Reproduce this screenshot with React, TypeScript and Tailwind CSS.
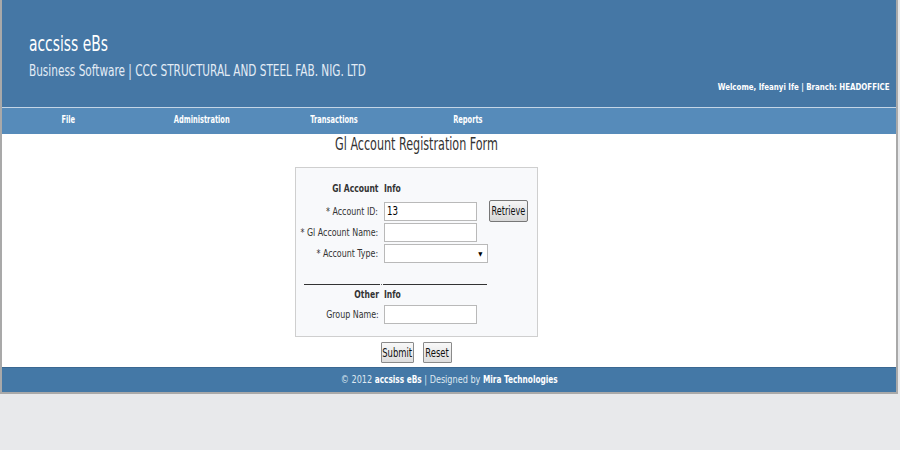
import React from 'react';

const font = "font-['DejaVu_Sans_Condensed','DejaVu_Sans',sans-serif]";

const menu = ['File', 'Administration', 'Transactions', 'Reports'];

// squeezes text horizontally, the reference uses a very narrow face
const Sq: React.FC<{ s?: string; o?: string; className?: string; children: React.ReactNode }> = ({
  s = 'scale-x-[0.75]',
  o = 'origin-left',
  className = '',
  children,
}) => <span className={`inline-block shrink-0 whitespace-nowrap ${s} ${o} ${className}`}>{children}</span>;

const Label: React.FC<{ text: string; bold?: boolean }> = ({ text, bold }) => (
  <div className="w-[84px] shrink-0 pr-[5px] flex items-center justify-end">
    {bold ? (
      <Sq s="scale-x-[0.85]" o="origin-right" className="text-[10px] leading-[12px] font-bold text-[#333]">
        {text}
      </Sq>
    ) : (
      <Sq s="scale-x-[0.8]" o="origin-right" className="text-[11px] leading-[13px] text-[#333]">
        {text}
      </Sq>
    )}
  </div>
);

const InfoTag = () => (
  <Sq s="scale-x-[0.85]" className="text-[10px] leading-[12px] font-bold text-[#333]">
    Info
  </Sq>
);

const TextBox: React.FC<{ value?: string }> = ({ value }) => (
  <div className="w-[93px] h-[19px] border border-[#b9b9b9] bg-white px-[2px] flex items-center overflow-hidden">
    <Sq s="scale-x-[0.8]" className="text-[12px] text-black">
      {value ?? ''}
    </Sq>
  </div>
);

const Btn: React.FC<{ w: string; children: React.ReactNode }> = ({ w, children }) => (
  <div className={`${w} h-[21px] border border-[#8a8a8a] rounded-[1px] bg-gradient-to-b from-[#f8f8f8] to-[#dedede] flex items-center justify-center`}>
    <Sq s="scale-x-[0.78]" o="origin-center" className="text-[12px] text-[#111]">
      {children}
    </Sq>
  </div>
);

export default function App() {
  return (
    <div className={`min-h-[450px] bg-[#e8e9eb] ${font}`}>
      <div className="w-[898px] border-x-2 border-b-2 border-[#a9a9a9] bg-white">
        <header className="h-[107px] bg-[#4577a5] flex flex-col pl-[27px] pr-[6px] text-white">
          <div className="mt-[31px] text-[22px] leading-[26px]">
            <Sq s="scale-x-[0.7]">accsiss eBs</Sq>
          </div>
          <div className="mt-[5px] text-[16px] leading-[18px] text-[#e3ecf5]">
            <Sq s="scale-x-[0.73]">Business Software | CCC STRUCTURAL AND STEEL FAB. NIG. LTD</Sq>
          </div>
          <div className="mt-[1px] self-end text-[9px] leading-[12px] font-bold">
            <Sq s="scale-x-[0.87]" o="origin-right">
              Welcome, Ifeanyi Ife | Branch: HEADOFFICE
            </Sq>
          </div>
        </header>
        <nav className="h-[27px] border-t border-[#c4d5e6] bg-[#568bba] flex items-center pb-[2px]">
          {menu.map((m) => (
            <div key={m} className="w-[133px] text-center text-[10px] leading-[12px] font-bold text-white">
              <Sq s="scale-x-[0.74]" o="origin-center">
                {m}
              </Sq>
            </div>
          ))}
        </nav>
        <main className="h-[233px] flex flex-col items-center">
          <h1 className="mr-[66px] text-[17px] leading-[20px] text-[#333]">
            <Sq s="scale-x-[0.73]" o="origin-center">
              Gl Account Registration Form
            </Sq>
          </h1>
          <div className="mt-[13px] mr-[66px] w-[243px] h-[170px] border border-[#cfcfcf] bg-[#f8f9fb] pl-[4px] pt-[10px]">
            <div className="flex items-center h-[21px]">
              <Label text="Gl Account" bold />
              <InfoTag />
            </div>
            <div className="flex items-center h-[22px] mt-[1px]">
              <Label text="* Account ID:" />
              <TextBox value="13" />
              <div className="ml-[12px] w-[39px] h-[22px] border border-[#777] rounded-[2px] bg-gradient-to-b from-[#f6f6f6] to-[#d8d8d8] flex items-center justify-center">
                <Sq s="scale-x-[0.75]" o="origin-center" className="text-[12px] text-[#111]">
                  Retrieve
                </Sq>
              </div>
            </div>
            <div className="flex items-center h-[21px]">
              <Label text="* Gl Account Name:" />
              <TextBox />
            </div>
            <div className="flex items-center h-[21px]">
              <Label text="* Account Type:" />
              <div className="w-[104px] h-[19px] border border-[#b9b9b9] bg-white flex items-center justify-end pr-[4px] text-[6px] text-black">
                ▼
              </div>
            </div>
            <div className="mt-[20px] flex items-center h-[1px]">
              <div className="ml-[4px] w-[76px] h-[1px] bg-[#333]" />
              <div className="ml-[1px] w-[1px] h-[1px] bg-[#666]" />
              <div className="ml-[1px] w-[104px] h-[1px] bg-[#333]" />
            </div>
            <div className="flex items-center h-[19px]">
              <Label text="Other" bold />
              <InfoTag />
            </div>
            <div className="flex items-center h-[21px]">
              <Label text="Group Name:" />
              <TextBox />
            </div>
          </div>
          <div className="mt-[5px] mr-[66px] flex gap-[9px]">
            <Btn w="w-[33px]">Submit</Btn>
            <Btn w="w-[29px]">Reset</Btn>
          </div>
        </main>
        <footer className="h-[25px] border-t border-[#3a6892] bg-[#4478a6] flex items-center justify-center pt-[1px] text-[11px] text-[#dfe8f1]">
          <Sq s="scale-x-[0.82]" o="origin-center">
            © 2012 <b className="text-[10px] text-white">accsiss eBs</b> | Designed by{' '}
            <b className="text-[10px] text-white">Mira Technologies</b>
          </Sq>
        </footer>
      </div>
    </div>
  );
}
